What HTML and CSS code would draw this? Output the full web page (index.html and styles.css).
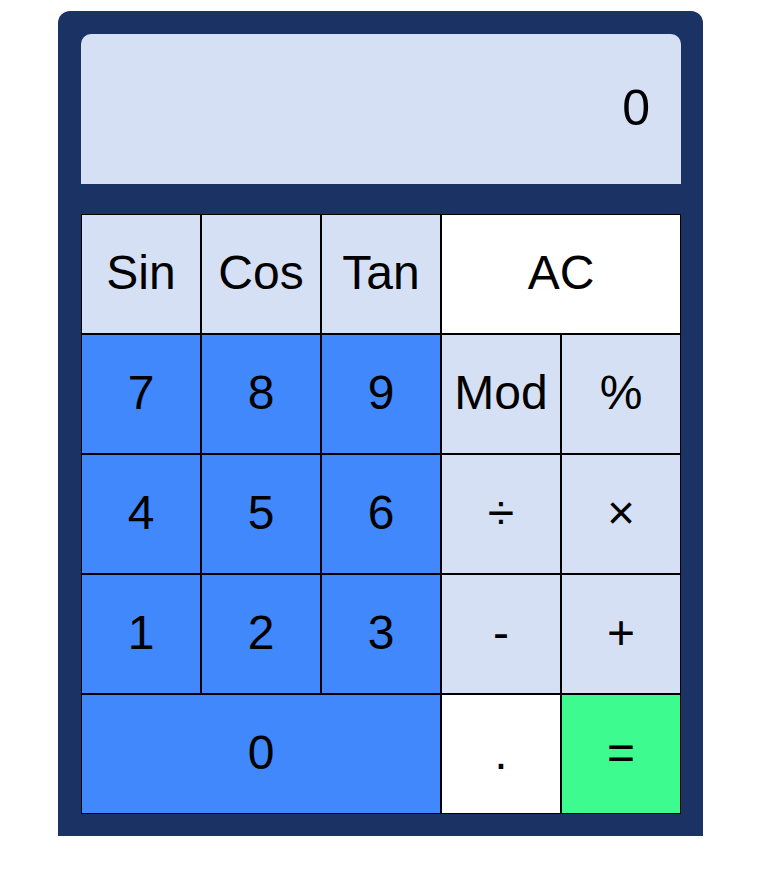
FILE: index.html
```
<!DOCTYPE html>
<html>
<head>
<meta charset="utf-8">
<link rel="stylesheet" href="styles.css">
</head>
<body>
<div class="calc">
  <div class="display">0</div>
  <div class="keys">
    <button class="key light">Sin</button>
    <button class="key light">Cos</button>
    <button class="key light">Tan</button>
    <button class="key white wide">AC</button>
    <button class="key blue">7</button>
    <button class="key blue">8</button>
    <button class="key blue">9</button>
    <button class="key light">Mod</button>
    <button class="key light">%</button>
    <button class="key blue">4</button>
    <button class="key blue">5</button>
    <button class="key blue">6</button>
    <button class="key light">÷</button>
    <button class="key light">×</button>
    <button class="key blue">1</button>
    <button class="key blue">2</button>
    <button class="key blue">3</button>
    <button class="key light">-</button>
    <button class="key light">+</button>
    <button class="key blue triple">0</button>
    <button class="key white">.</button>
    <button class="key green">=</button>
  </div>
</div>
</body>
</html>
```
FILE: styles.css
```
html, body {
  margin: 0;
  padding: 0;
  background: #ffffff;
}
.calc {
  width: 645px;
  box-sizing: border-box;
  margin: 11px 0 0 58px;
  padding: 23px 22px 22px 23px;
  background: #1b3264;
  border-radius: 12px 12px 0 0;
}
.display {
  height: 150px;
  box-sizing: border-box;
  background: #d6e0f4;
  border-radius: 10px 10px 0 0;
  display: flex;
  align-items: center;
  justify-content: flex-end;
  padding: 0 31px 2px 0;
  font-family: "Liberation Sans", Arial, sans-serif;
  font-size: 50px;
  color: #000;
}
.keys {
  margin-top: 30px;
  display: grid;
  grid-template-columns: repeat(5, 120px);
  grid-auto-rows: 120px;
}
.key {
  box-sizing: border-box;
  border: 1px solid #000;
  margin: 0;
  padding: 0 0 3px 0;
  font-family: "Liberation Sans", Arial, sans-serif;
  font-size: 48px;
  color: #000;
  display: flex;
  align-items: center;
  justify-content: center;
}
.light { background: #d6e0f4; }
.white { background: #ffffff; }
.blue { background: #4088fb; }
.green { background: #3dfb8e; }
.wide { grid-column: span 2; }
.triple { grid-column: span 3; }
```
